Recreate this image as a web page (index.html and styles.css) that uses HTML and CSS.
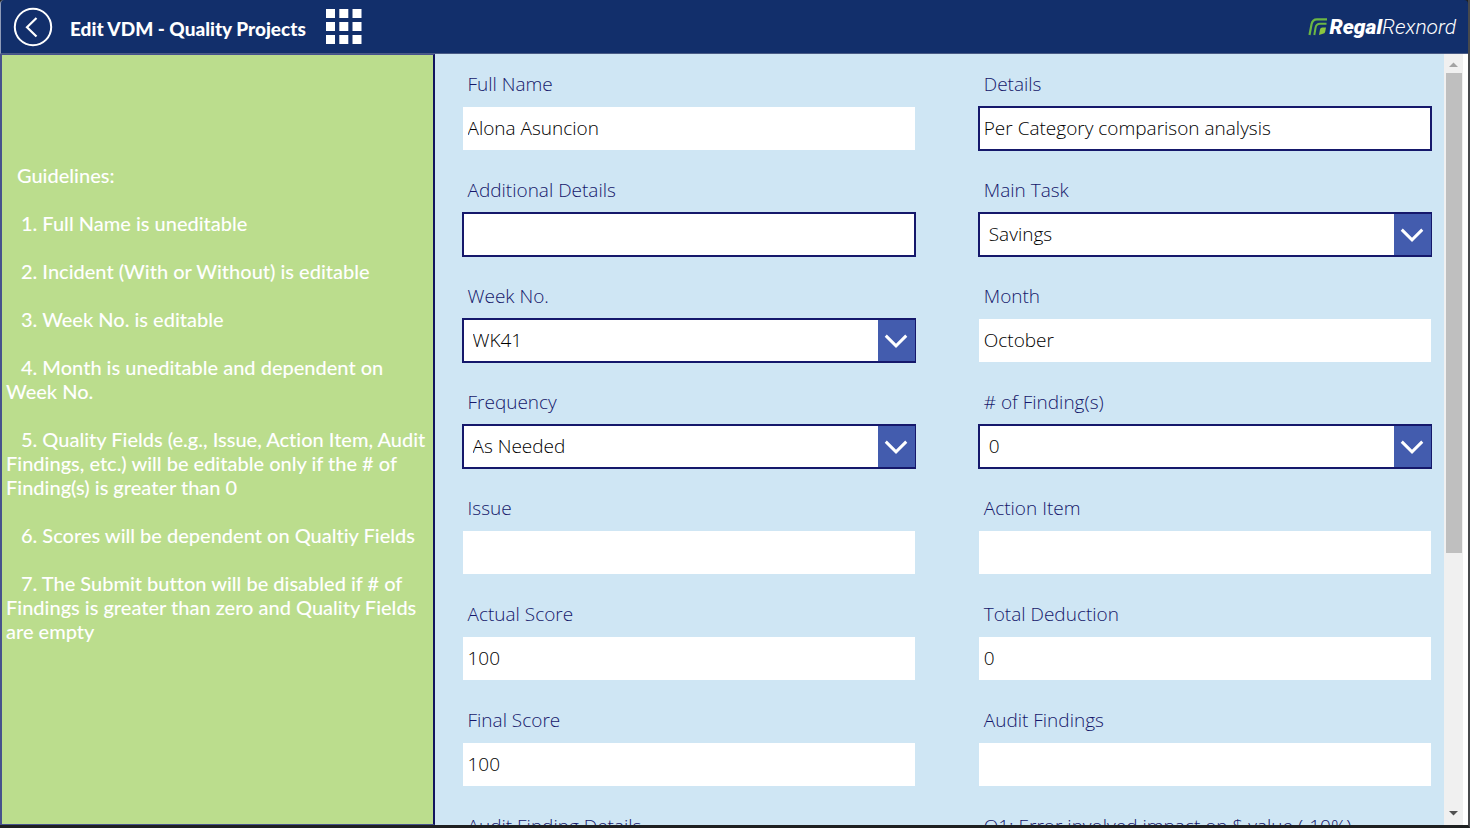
FILE: index.html
```html
<!DOCTYPE html>
<html lang="en">
<head>
<meta charset="utf-8">
<title>Edit VDM - Quality Projects</title>
<link rel="stylesheet" href="styles.css">
</head>
<body>
<div class="app">
  <header class="topbar">
    <button class="icon-btn" type="button" aria-label="Back">
      <svg width="40" height="40" viewBox="0 0 40 40" fill="none" stroke="#fff"><circle cx="20" cy="20" r="18.2" stroke-width="2"/><path d="M23.5 11 14 20.2l9.5 9.3" stroke-width="2.2"/></svg>
    </button>
    <h1 class="title">Edit VDM - Quality Projects</h1>
    <button class="icon-btn" type="button" aria-label="Menu">
      <svg width="36" height="36" viewBox="0 0 36 36" fill="#fff"><path d="M0 0h9v9H0zM13.300 0h9v9h-9zM26.500 0h9v9h-9zM0 13h9v9H0zM13.300 13h9v9h-9zM26.500 13h9v9h-9zM0 26h9v9H0zM13.300 26h9v9h-9zM26.500 26h9v9h-9z"/></svg>
    </button>
    <div class="brand">
      <svg width="20" height="18" viewBox="0 0 20 18" fill="none" stroke="#6cb744"><path d="M1.500 17 3.600 6Q4.500 1.300 9 1.300H19" stroke-width="2.200"/><path d="M6.300 17 7.600 9.500Q8.300 5.800 12 5.800h6.500" stroke-width="2"/><path d="M11 17l1-5.500q.3-2 2.500-2H18l-.8 4.200q-.4 1.800-2.300 2z" fill="#8cc63f" stroke="none"/></svg>
      <span class="brand-name"><b>Regal</b>Rexnord</span>
    </div>
  </header>
  <div class="body">
    <aside class="guide">
      <p class="guide-head">Guidelines:</p>
      <ol class="guide-list">
        <li>1. Full Name is uneditable</li>
        <li>2. Incident (With or Without) is editable</li>
        <li>3. Week No. is editable</li>
        <li>4. Month is uneditable and dependent on Week No.</li>
        <li>5. Quality Fields (e.g., Issue, Action Item, Audit Findings, etc.) will be editable only if the # of Finding(s) is greater than 0</li>
        <li>6. Scores will be dependent on Qualtiy Fields</li>
        <li>7. The Submit button will be disabled if # of Findings is greater than zero and Quality Fields are empty</li>
      </ol>
    </aside>
    <form class="form">
      <div class="field"><label for="name">Full Name</label><input class="box" id="name" value="Alona Asuncion" readonly></div>
      <div class="field"><label for="details">Details</label><input class="box editable" id="details" value="Per Category comparison analysis"></div>
      <div class="field"><label for="more">Additional Details</label><input class="box editable" id="more"></div>
      <div class="field"><label for="task">Main Task</label>
        <div class="drop"><select class="box editable" id="task"><option>Savings</option></select><svg class="chevron" viewBox="0 0 36 42"><path d="M7 16l10.500 10.500L28 16"/></svg></div></div>
      <div class="field"><label for="week">Week No.</label>
        <div class="drop"><select class="box editable" id="week"><option>WK41</option></select><svg class="chevron" viewBox="0 0 36 42"><path d="M7 16l10.500 10.500L28 16"/></svg></div></div>
      <div class="field"><label for="month">Month</label><input class="box" id="month" value="October" readonly></div>
      <div class="field"><label for="freq">Frequency</label>
        <div class="drop"><select class="box editable" id="freq"><option>As Needed</option></select><svg class="chevron" viewBox="0 0 36 42"><path d="M7 16l10.500 10.500L28 16"/></svg></div></div>
      <div class="field"><label for="count"># of Finding(s)</label>
        <div class="drop"><select class="box editable" id="count"><option>0</option></select><svg class="chevron" viewBox="0 0 36 42"><path d="M7 16l10.500 10.500L28 16"/></svg></div></div>
      <div class="field"><label for="issue">Issue</label><input class="box" id="issue" readonly></div>
      <div class="field"><label for="action">Action Item</label><input class="box" id="action" readonly></div>
      <div class="field"><label for="actual">Actual Score</label><input class="box" id="actual" value="100" readonly></div>
      <div class="field"><label for="deduct">Total Deduction</label><input class="box" id="deduct" value="0" readonly></div>
      <div class="field"><label for="final">Final Score</label><input class="box" id="final" value="100" readonly></div>
      <div class="field"><label for="audit">Audit Findings</label><input class="box" id="audit" readonly></div>
      <div class="field"><label for="auditd">Audit Finding Details</label><input class="box" id="auditd" readonly></div>
      <div class="field"><label for="q1">Q1: Error involved impact on $ value (-10%)</label><input class="box" id="q1" readonly></div>
    </form>
    <div class="scroll" aria-hidden="true">
      <svg width="19" height="18" viewBox="0 0 19 18"><path d="M5 13h9l-4.500-4.500z" fill="#a3a3a3"/></svg>
      <div class="track"><div class="thumb"></div></div>
      <svg width="19" height="18" viewBox="0 0 19 18"><path d="M5 4h9l-4.500 4.500z" fill="#505050"/></svg>
    </div>
  </div>
</div>
</body>
</html>
```
FILE: styles.css
```css
* { box-sizing: border-box; }
body { margin: 0; background: #1e2021; overflow: hidden; }
.app {
  display: flex;
  flex-direction: column;
  height: 100vh;
  border-right: 2px solid #47494c;
  border-bottom: 3px solid #1e2021;
  font-family: "Open Sans", "Noto Sans", sans-serif;
}
.topbar {
  display: flex;
  align-items: center;
  flex: none;
  height: 54px;
  padding: 0 12px;
  background: #122f6b;
  border-left: 1px solid #8e9bb8;
  border-bottom: 1px solid #4a5c86;
  border-radius: 4px 4px 0 0;
  color: #fff;
}
.icon-btn { display: flex; padding: 0; border: 0; background: none; cursor: pointer; }
.title {
  margin: 0 20px 0 17px;
  padding-top: 4px;
  font: 900 19px/24px Lato, sans-serif;
  font-variant-ligatures: none;
}
.brand { display: flex; align-items: center; gap: 1px; margin-left: auto; }
.brand-name { font: italic 300 21px/24px Roboto, sans-serif; }
.brand-name b { font-weight: 900; }
.body {
  display: grid;
  grid-template-columns: 29.6% minmax(0, 1fr) 24px;
  flex: 1;
  min-height: 0;
  overflow: hidden;
}
.guide {
  padding: 108px 2px 0 4px;
  background: #bbdd8d;
  border: 1px solid #46528c;
  border-left-width: 2px;
  border-right: 2px solid #11145e;
  color: #fff;
  font: 500 20px/24px Lato, sans-serif;
  font-variant-ligatures: none;
}
.guide-head { margin: 0 0 24px 11px; }
.guide-list {
  display: flex;
  flex-direction: column;
  gap: 24px;
  margin: 0;
  padding: 0;
  list-style: none;
  text-indent: 15px;
}
.form {
  display: grid;
  grid-template-columns: 1fr 1fr;
  align-content: start;
  gap: 27px 62px;
  padding: 18px 12px 0 27px;
  background: #cfe6f4;
  overflow: hidden;
}
.field { display: flex; flex-direction: column; gap: 10px; }
.field label { padding-left: 6px; color: #15186b; font-size: 19px; font-weight: 350; line-height: 24px; }
.box {
  width: 100%;
  height: 45px;
  margin: 0;
  padding: 0 5px 1px;
  border: 1px solid #cfe6f4;
  border-radius: 0;
  background: #fff;
  color: #000;
  font: 350 19px/24px "Open Sans", "Noto Sans", sans-serif;
  appearance: none;
  outline: 0;
}
.editable { padding: 0 4px 1px; border: 2px solid #15186b; }
.drop { display: grid; }
.drop > * { grid-area: 1 / 1; }
.drop .box { padding-left: 9px; }
.chevron {
  justify-self: end;
  align-self: center;
  width: 37px;
  height: 41px;
  margin-right: 1px;
  background: #435cae;
  fill: none;
  stroke: #fff;
  stroke-width: 3;
  pointer-events: none;
}
.scroll {
  display: flex;
  flex-direction: column;
  background: #f0f0f0;
  border-right: 5px solid #fff;
}
.scroll svg { flex: none; display: block; }
.track { flex: 1; padding: 1px 1px 0 2px; }
.thumb { height: 65.4%; background: #bfbfbf; }
```
